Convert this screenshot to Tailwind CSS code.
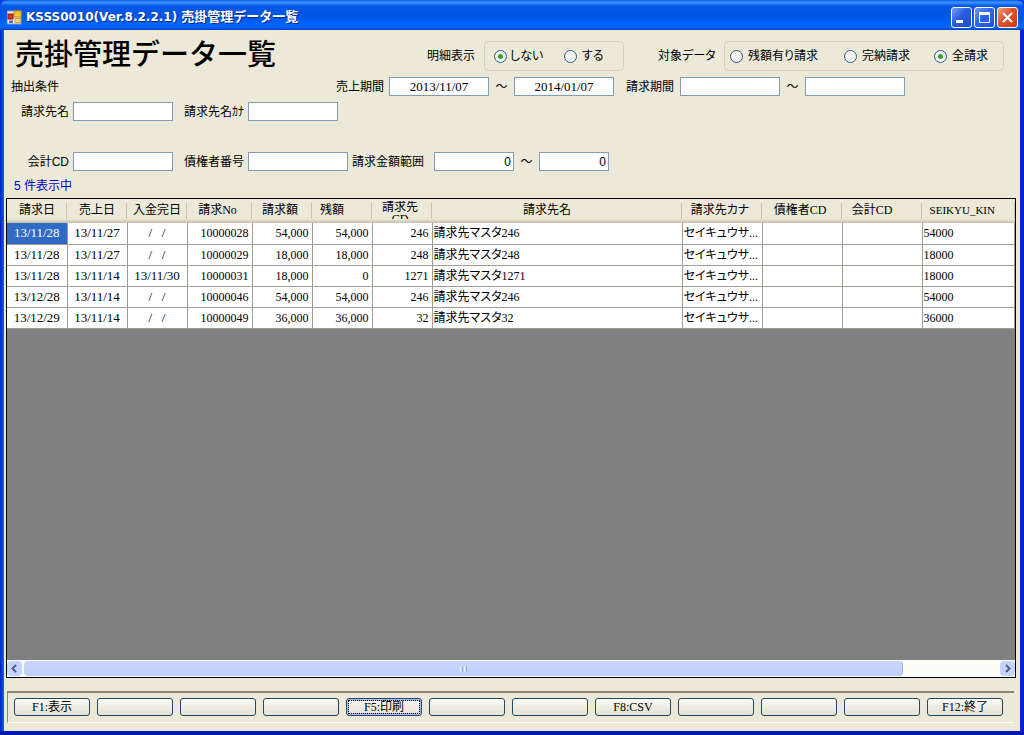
<!DOCTYPE html>
<html lang="ja">
<head>
<meta charset="utf-8">
<title>売掛管理データ一覧</title>
<script src="https://cdn.jsdelivr.net/npm/@tailwindcss/browser@4"></script>
</head>
<body class="min-h-screen bg-[#0a3fe0]">
<div class="flex min-h-screen flex-col rounded-t-lg border-b-4 border-[#0019b0] bg-[linear-gradient(90deg,#0019cf_0,#0855dd_3px,#1660e8_4px,#0855dd_99%,#0019cf_100%)] px-1 text-xs text-black font-['Liberation_Serif','Noto_Sans_CJK_JP',sans-serif] [font-feature-settings:'palt']">

  <header class="-mx-1 flex h-[30px] shrink-0 items-center rounded-t-lg bg-[linear-gradient(180deg,#0a5bd8_0%,#3a93ff_8%,#0458e8_20%,#0055e5_55%,#0266ff_85%,#0260f0_93%,#0040b8_100%)] pt-1 pr-1.5 pl-[7px]">
    <svg class="size-[15px] shrink-0" viewBox="0 0 15 15" aria-hidden="true">
      <rect x="0" y="1" width="14" height="13" fill="#f4f4f4" stroke="#8a96b4"/>
      <rect x="7" y="1" width="7" height="6" fill="#f6c52a" stroke="#b98a10"/>
      <rect x="1" y="4" width="5" height="5" fill="#d83a20" stroke="#8c1c0c"/>
      <rect x="8" y="8.500" width="5" height="4" fill="#f2d777" stroke="#c9a43a"/>
      <rect x="2" y="10.500" width="4" height="2.500" fill="#3f6fd0"/>
    </svg>
    <h1 class="ml-1 flex flex-1 items-center gap-1 truncate text-[13px] leading-5 font-bold text-white [font-feature-settings:normal] [text-shadow:1px_1px_0_#0a2a80] font-['DejaVu_Sans','Noto_Sans_CJK_JP',sans-serif]"><span class="text-xs">KSSS0010(Ver.8.2.2.1)</span><span>売掛管理データ一覧</span></h1>
    <div class="flex gap-0.5">
      <button type="button" aria-label="最小化" class="size-[21px] rounded-[3px] border border-white bg-[linear-gradient(135deg,#7a9cf0,#2a5ce0_45%,#1c4ccc)]"><svg viewBox="0 0 19 19" class="size-[19px]"><rect x="4" y="12" width="7" height="3" fill="#fff"/></svg></button>
      <button type="button" aria-label="最大化" class="size-[21px] rounded-[3px] border border-white bg-[linear-gradient(135deg,#7a9cf0,#2a66ec_45%,#1c54dc)]"><svg viewBox="0 0 19 19" class="size-[19px]"><path d="M4.500 5v9.500h10V5" fill="none" stroke="#fff"/><rect x="4" y="4" width="11" height="3" fill="#fff"/></svg></button>
      <button type="button" aria-label="閉じる" class="size-[21px] rounded-[3px] border border-white bg-[linear-gradient(135deg,#f0a088,#e0502c_45%,#c83c14)]"><svg viewBox="0 0 19 19" class="size-[19px]"><path d="M5 5l9 9M14 5l-9 9" stroke="#fff" stroke-width="2.200" fill="none"/></svg></button>
    </div>
  </header>

  <main class="flex flex-1 flex-col bg-[#ece9d8]">
    <form class="flex flex-col font-['Liberation_Sans','Noto_Sans_CJK_JP',sans-serif]">
      <div class="flex h-[43px] items-end pb-0.5 pl-[11px]">
        <h2 class="w-[412px] shrink-0 text-[29px] leading-8 font-medium whitespace-nowrap [font-feature-settings:normal]">売掛管理データ一覧</h2>
        <div role="radiogroup" aria-labelledby="detailLabel" class="flex items-center">
          <span id="detailLabel" class="w-[57px] whitespace-nowrap">明細表示</span>
          <div class="flex h-[30px] w-[140px] items-center rounded border border-[#d5d0bc] pl-[9px]">
            <label class="flex w-[70px] items-center gap-[3px] whitespace-nowrap"><input type="radio" name="detail" checked class="size-[13px] appearance-none rounded-full border border-[#2c5c86] bg-[#f4f4f0] checked:bg-[radial-gradient(circle,#2aa82a_0,#2aa82a_2px,#f4f4f0_3px)]">しない</label>
            <label class="flex items-center gap-[5px] whitespace-nowrap"><input type="radio" name="detail" class="size-[13px] appearance-none rounded-full border border-[#2c5c86] bg-[#f4f4f0] checked:bg-[radial-gradient(circle,#2aa82a_0,#2aa82a_2px,#f4f4f0_3px)]">する</label>
          </div>
        </div>
        <div role="radiogroup" aria-labelledby="targetLabel" class="ml-[34px] flex items-center">
          <span id="targetLabel" class="w-[66px] whitespace-nowrap">対象データ</span>
          <div class="flex h-[30px] w-[280px] items-center rounded border border-[#d5d0bc] pl-[5px]">
            <label class="flex w-[114px] items-center gap-[5px] whitespace-nowrap"><input type="radio" name="target" class="size-[13px] appearance-none rounded-full border border-[#2c5c86] bg-[#f4f4f0] checked:bg-[radial-gradient(circle,#2aa82a_0,#2aa82a_2px,#f4f4f0_3px)]">残額有り請求</label>
            <label class="flex w-[90px] items-center gap-[5px] whitespace-nowrap"><input type="radio" name="target" class="size-[13px] appearance-none rounded-full border border-[#2c5c86] bg-[#f4f4f0] checked:bg-[radial-gradient(circle,#2aa82a_0,#2aa82a_2px,#f4f4f0_3px)]">完納請求</label>
            <label class="flex items-center gap-[5px] whitespace-nowrap"><input type="radio" name="target" checked class="size-[13px] appearance-none rounded-full border border-[#2c5c86] bg-[#f4f4f0] checked:bg-[radial-gradient(circle,#2aa82a_0,#2aa82a_2px,#f4f4f0_3px)]">全請求</label>
          </div>
        </div>
      </div>

      <div class="mt-1 flex h-[19px] items-center pl-[7px]">
        <span class="w-[325px]">抽出条件</span>
        <label for="uFrom" class="w-[53px]">売上期間</label>
        <input id="uFrom" value="2013/11/07" class="h-[19px] w-[100px] border border-[#7f9db9] bg-white text-center text-[13px] font-['Liberation_Serif',serif]">
        <span class="w-[25px] text-center">～</span>
        <input aria-label="売上期間 終了" value="2014/01/07" class="h-[19px] w-[100px] border border-[#7f9db9] bg-white text-center text-[13px] font-['Liberation_Serif',serif]">
        <label for="sFrom" class="ml-3 w-[54px]">請求期間</label>
        <input id="sFrom" class="h-[19px] w-[100px] border border-[#7f9db9] bg-white text-center text-[13px] font-['Liberation_Serif',serif]">
        <span class="w-[25px] text-center">～</span>
        <input aria-label="請求期間 終了" class="h-[19px] w-[100px] border border-[#7f9db9] bg-white text-center text-[13px] font-['Liberation_Serif',serif]">
      </div>

      <div class="mt-1.5 flex h-[19px] items-center">
        <label for="name" class="w-[69px] pr-1 text-right">請求先名</label>
        <input id="name" class="h-[19px] w-[100px] border border-[#7f9db9] bg-white px-1">
        <label for="kana" class="w-[75px] pr-1 text-right whitespace-nowrap">請求先名ｶﾅ</label>
        <input id="kana" class="h-[19px] w-[90px] border border-[#7f9db9] bg-white px-1">
      </div>

      <div class="mt-[31px] flex h-[19px] items-center">
        <label for="acc" class="w-[69px] pr-1 text-right whitespace-nowrap">会計CD</label>
        <input id="acc" class="h-[19px] w-[100px] border border-[#7f9db9] bg-white px-1">
        <label for="cred" class="w-[75px] pr-1 text-right">債権者番号</label>
        <input id="cred" class="h-[19px] w-[100px] border border-[#7f9db9] bg-white px-1">
        <label for="amt" class="ml-1 w-[82px]">請求金額範囲</label>
        <input id="amt" value="0" class="h-[19px] w-20 border border-[#7f9db9] bg-white px-0.5 text-right">
        <span class="w-[25px] text-center">～</span>
        <input aria-label="請求金額範囲 上限" value="0" class="h-[19px] w-[70px] border border-[#7f9db9] bg-white px-0.5 text-right">
      </div>
      <p class="h-[27px] pt-[7px] pl-2.5 leading-4 text-[#0000c8]">5 件表示中</p>
    </form>

    <section class="mr-1 ml-0.5 flex flex-1 flex-col border border-black bg-[#808080]">
      <table class="w-full table-fixed border-collapse bg-white leading-5">
        <colgroup><col class="w-[60px]"><col class="w-[60px]"><col class="w-[60px]"><col class="w-[65px]"><col class="w-[60px]"><col class="w-[60px]"><col class="w-[60px]"><col class="w-[250px]"><col class="w-20"><col class="w-20"><col class="w-20"><col></colgroup>
        <thead>
          <tr class="h-6 bg-[linear-gradient(180deg,#ece9d8_0%,#ece9d8_84%,#d6d2c2_92%,#c4c0ae_100%)] [&>th]:p-0 [&>th]:pb-0.5 [&>th]:font-normal [&>th]:bg-[linear-gradient(#c7c5b2,#c7c5b2)] [&>th]:bg-no-repeat [&>th]:bg-[length:1px_16px] [&>th]:bg-[position:right_4px] [&>th]:whitespace-nowrap">
            <th>請求日</th><th>売上日</th><th>入金完日</th><th><div class="pr-1">請求No</div></th><th><div class="pr-1">請求額</div></th><th><div class="pr-5">残額</div></th>
            <th><div class="h-[18px] overflow-hidden pr-1 leading-3 whitespace-normal">請求先<br>CD</div></th>
            <th><div class="pr-5">請求先名</div></th><th><div class="pr-1">請求先カナ</div></th><th><div class="pr-1">債権者CD</div></th><th><div class="pr-5">会計CD</div></th><th><div class="pr-3 text-[11px]">SEIKYU_KIN</div></th>
          </tr>
        </thead>
        <tbody class="[&>tr]:h-[21px] [&_td]:border-r [&_td]:border-b [&_td]:border-[#a09d92] [&_td]:p-0 [&_td]:whitespace-nowrap">
          <tr><td class="bg-[#316ac5] text-center text-[13px] text-white">13/11/28</td><td class="text-center text-[13px]">13/11/27</td><td class="text-center text-[13px] whitespace-pre!">/   /</td><td><div class="pr-[3px] text-right">10000028</div></td><td><div class="pr-[3px] text-right">54,000</div></td><td><div class="pr-[3px] text-right">54,000</div></td><td><div class="pr-[3px] text-right">246</div></td><td><div class="pl-px">請求先マスタ246</div></td><td><div class="pl-px">セイキュウサ...</div></td><td></td><td></td><td><div class="pl-px">54000</div></td></tr>
          <tr><td class="text-center text-[13px]">13/11/28</td><td class="text-center text-[13px]">13/11/27</td><td class="text-center text-[13px] whitespace-pre!">/   /</td><td><div class="pr-[3px] text-right">10000029</div></td><td><div class="pr-[3px] text-right">18,000</div></td><td><div class="pr-[3px] text-right">18,000</div></td><td><div class="pr-[3px] text-right">248</div></td><td><div class="pl-px">請求先マスタ248</div></td><td><div class="pl-px">セイキュウサ...</div></td><td></td><td></td><td><div class="pl-px">18000</div></td></tr>
          <tr><td class="text-center text-[13px]">13/11/28</td><td class="text-center text-[13px]">13/11/14</td><td class="text-center text-[13px]">13/11/30</td><td><div class="pr-[3px] text-right">10000031</div></td><td><div class="pr-[3px] text-right">18,000</div></td><td><div class="pr-[3px] text-right">0</div></td><td><div class="pr-[3px] text-right">1271</div></td><td><div class="pl-px">請求先マスタ1271</div></td><td><div class="pl-px">セイキュウサ...</div></td><td></td><td></td><td><div class="pl-px">18000</div></td></tr>
          <tr><td class="text-center text-[13px]">13/12/28</td><td class="text-center text-[13px]">13/11/14</td><td class="text-center text-[13px] whitespace-pre!">/   /</td><td><div class="pr-[3px] text-right">10000046</div></td><td><div class="pr-[3px] text-right">54,000</div></td><td><div class="pr-[3px] text-right">54,000</div></td><td><div class="pr-[3px] text-right">246</div></td><td><div class="pl-px">請求先マスタ246</div></td><td><div class="pl-px">セイキュウサ...</div></td><td></td><td></td><td><div class="pl-px">54000</div></td></tr>
          <tr><td class="text-center text-[13px]">13/12/29</td><td class="text-center text-[13px]">13/11/14</td><td class="text-center text-[13px] whitespace-pre!">/   /</td><td><div class="pr-[3px] text-right">10000049</div></td><td><div class="pr-[3px] text-right">36,000</div></td><td><div class="pr-[3px] text-right">36,000</div></td><td><div class="pr-[3px] text-right">32</div></td><td><div class="pl-px">請求先マスタ32</div></td><td><div class="pl-px">セイキュウサ...</div></td><td></td><td></td><td><div class="pl-px">36000</div></td></tr>
        </tbody>
      </table>
      <div class="mt-auto flex h-[17px] gap-0.5 bg-[#fbfbf8] py-px">
        <button type="button" aria-label="左へ" class="h-[15px] w-[15px] rounded-sm bg-[#c6d5fb]"><svg viewBox="0 0 15 15" class="size-[15px]"><path d="M9 4L5.500 7.500 9 11" fill="none" stroke="#4d6185" stroke-width="2"/></svg></button>
        <div class="flex flex-[878] items-center justify-center gap-px rounded-sm border-r border-[#98b4e8] bg-[linear-gradient(180deg,#c9d6fc,#bccffb)]">
          <i class="h-1.5 w-px bg-[#eef4fe]"></i><i class="h-1.5 w-px bg-[#8cb0f8]"></i><i class="h-1.5 w-px bg-[#eef4fe]"></i><i class="h-1.5 w-px bg-[#8cb0f8]"></i>
        </div>
        <div class="flex-[93]"></div>
        <button type="button" aria-label="右へ" class="h-[15px] w-[15px] rounded-sm bg-[#c6d5fb]"><svg viewBox="0 0 15 15" class="size-[15px]"><path d="M6 4l3.500 3.500L6 11" fill="none" stroke="#4d6185" stroke-width="2"/></svg></button>
      </div>
    </section>

    <footer class="mt-[13px] mr-1.5 mb-2 ml-[3px] grid grid-cols-12 gap-[7px] border-t-2 border-b border-l border-t-[#8a8776] border-b-white border-l-[#8a8776] pt-[5px] pr-[11px] pb-[6px] pl-1.5 [&>button]:h-[18px] [&>button]:rounded-[3px] [&>button]:border [&>button]:border-[#1c4a66] [&>button]:bg-[linear-gradient(180deg,#ffffff,#f0eee4_40%,#e6e2d4)] [&>button]:leading-4">
      <button type="button">F1:表示</button>
      <button type="button" aria-label="F2"></button>
      <button type="button" aria-label="F3"></button>
      <button type="button" aria-label="F4"></button>
      <button type="button" class="shadow-[inset_0_0_0_2px_#a9c0f0] outline-1 -outline-offset-3 outline-dotted outline-black">F5:印刷</button>
      <button type="button" aria-label="F6"></button>
      <button type="button" aria-label="F7"></button>
      <button type="button">F8:CSV</button>
      <button type="button" aria-label="F9"></button>
      <button type="button" aria-label="F10"></button>
      <button type="button" aria-label="F11"></button>
      <button type="button">F12:終了</button>
    </footer>
  </main>
</div>
</body>
</html>
